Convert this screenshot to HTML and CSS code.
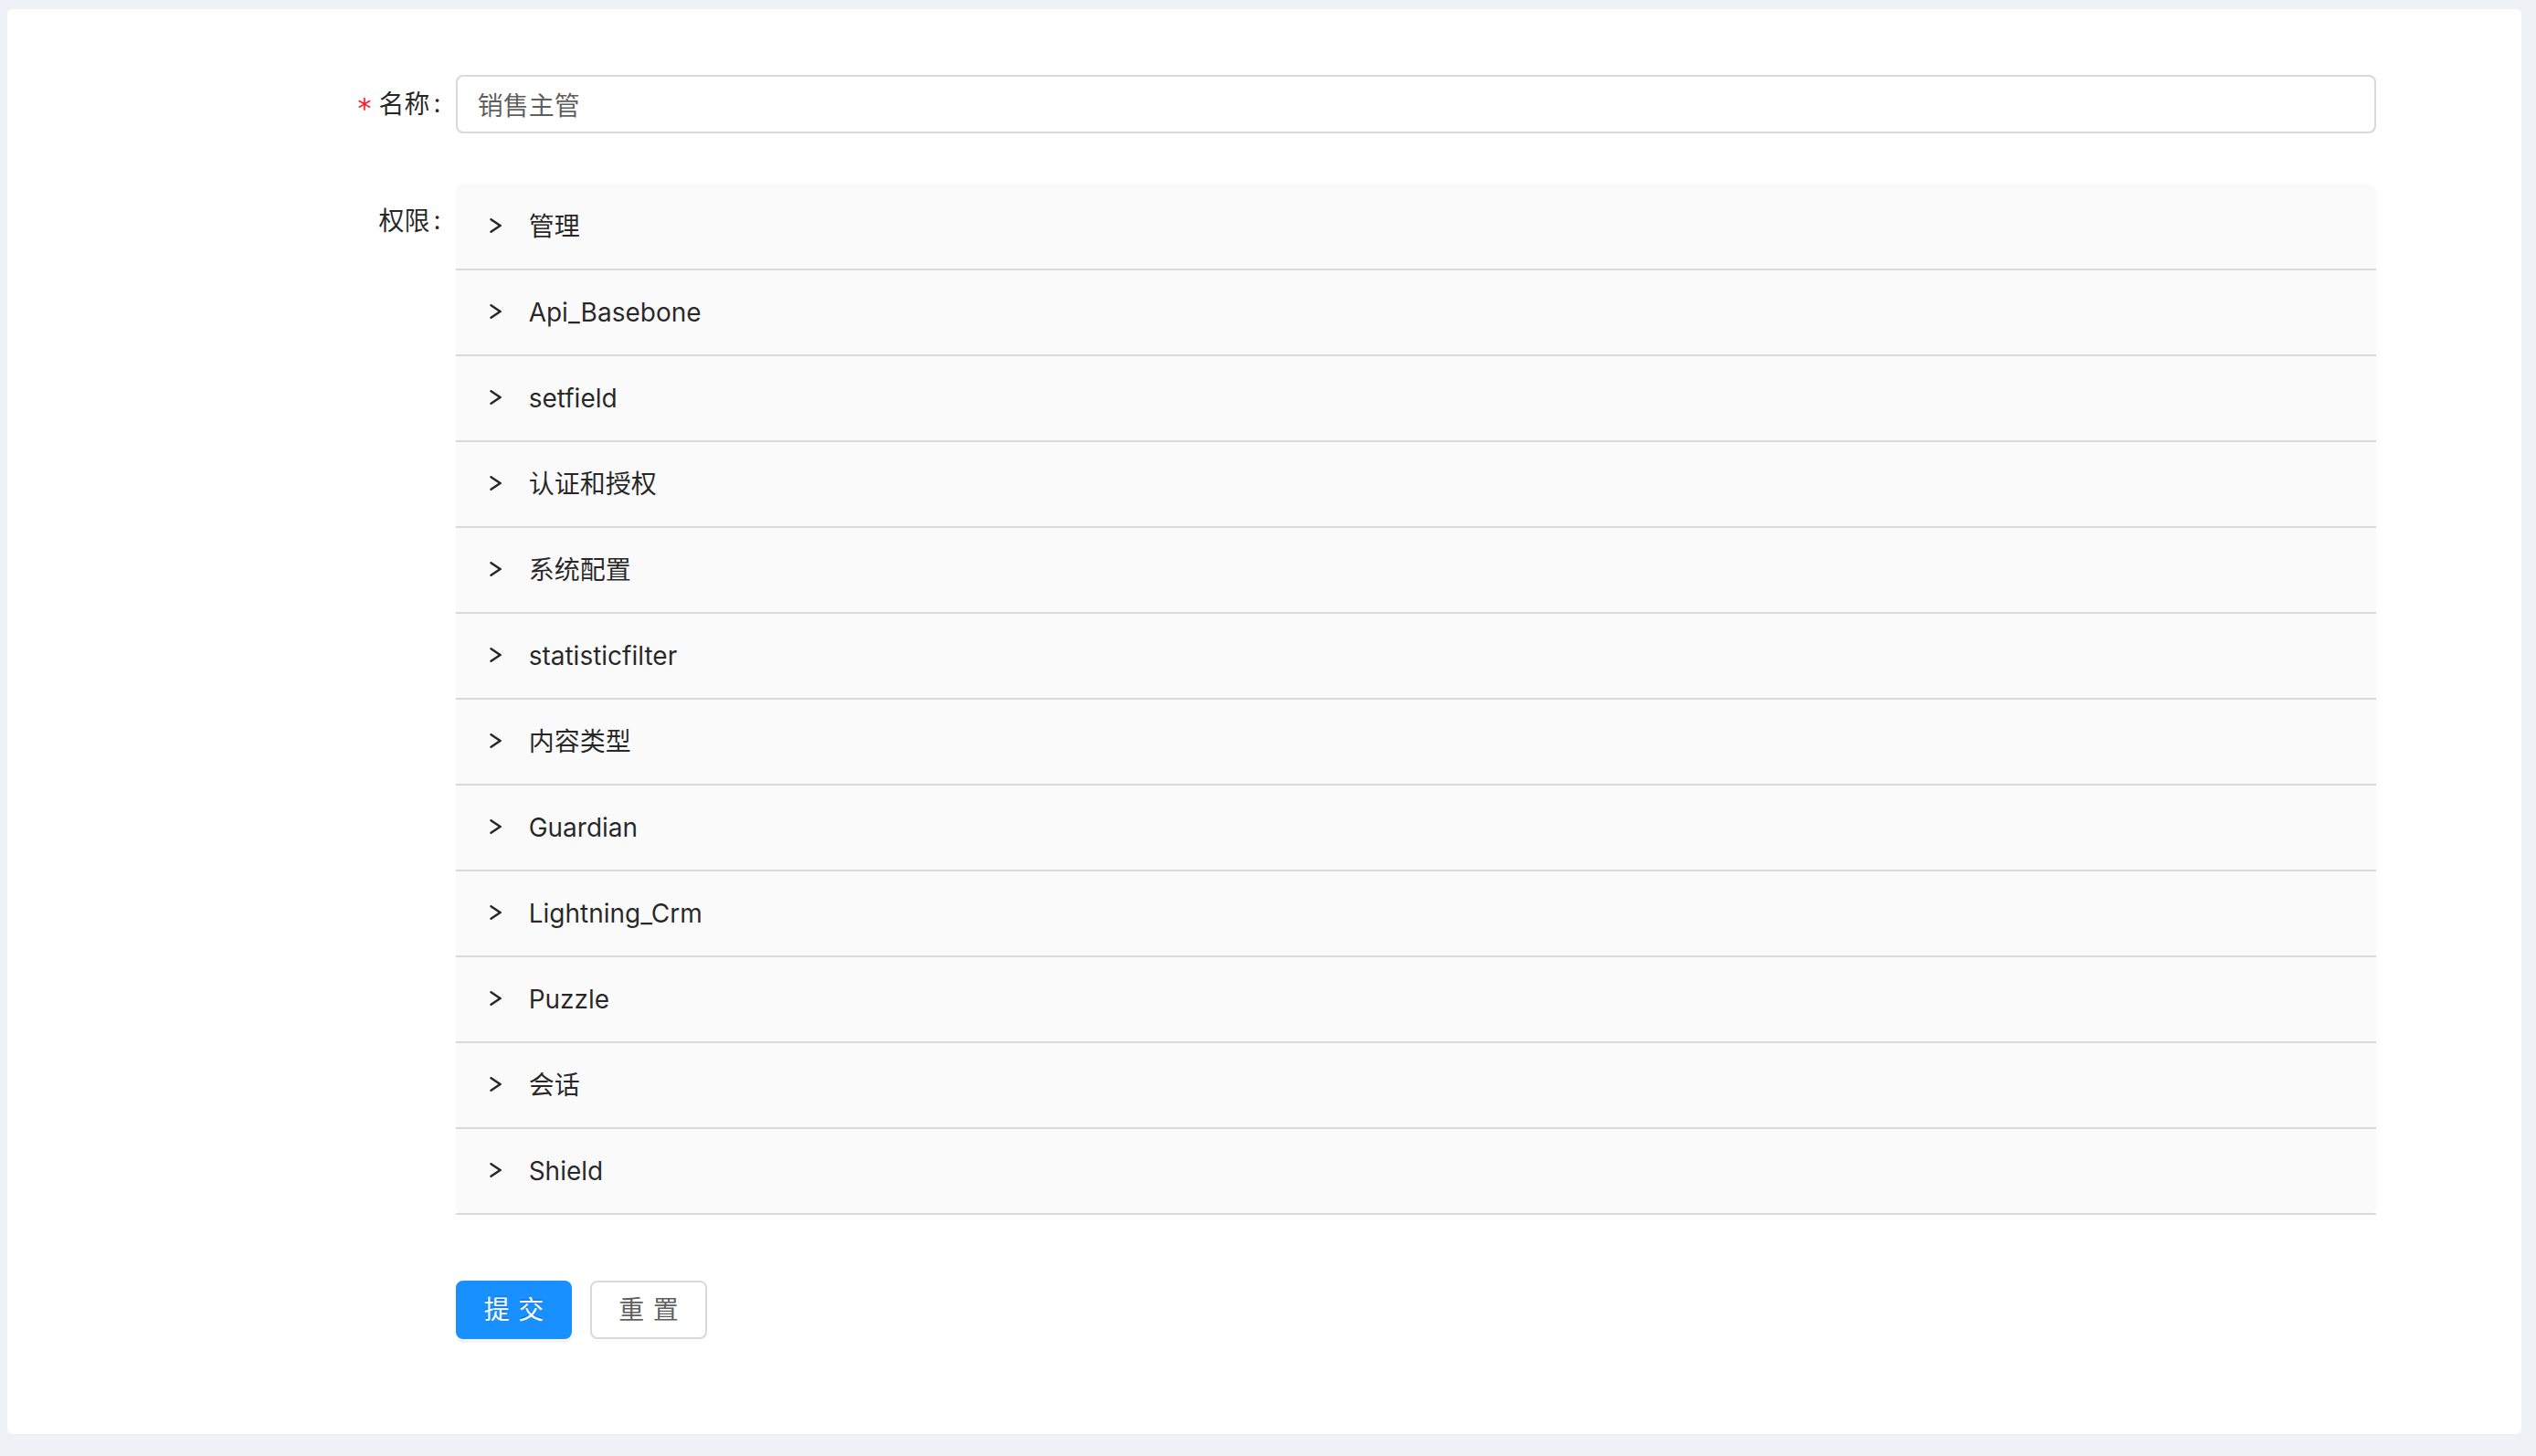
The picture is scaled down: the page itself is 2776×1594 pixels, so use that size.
FILE: index.html
```html
<!DOCTYPE html>
<html lang="zh-CN">
<head>
<meta charset="utf-8">
<title>角色编辑</title>
<link rel="stylesheet" href="styles.css">
</head>
<body>
<div class="layout">
  <div class="card">
    <form class="form">
      <div class="form-item">
        <div class="form-label"><label class="required">名称</label></div>
        <div class="form-control control-input">
          <input class="input" type="text" value="销售主管">
        </div>
      </div>
      <div class="form-item form-item-collapse">
        <div class="form-label"><label>权限</label></div>
        <div class="form-control">
          <div class="collapse">
            <div class="collapse-item"><div class="collapse-header"><svg class="arrow" viewBox="0 0 13 16"><polyline points="1.5,1.2 11.5,8 1.5,14.8"/></svg>管理</div></div>
            <div class="collapse-item"><div class="collapse-header"><svg class="arrow" viewBox="0 0 13 16"><polyline points="1.5,1.2 11.5,8 1.5,14.8"/></svg>Api_Basebone</div></div>
            <div class="collapse-item"><div class="collapse-header"><svg class="arrow" viewBox="0 0 13 16"><polyline points="1.5,1.2 11.5,8 1.5,14.8"/></svg>setfield</div></div>
            <div class="collapse-item"><div class="collapse-header"><svg class="arrow" viewBox="0 0 13 16"><polyline points="1.5,1.2 11.5,8 1.5,14.8"/></svg>认证和授权</div></div>
            <div class="collapse-item"><div class="collapse-header"><svg class="arrow" viewBox="0 0 13 16"><polyline points="1.5,1.2 11.5,8 1.5,14.8"/></svg>系统配置</div></div>
            <div class="collapse-item"><div class="collapse-header"><svg class="arrow" viewBox="0 0 13 16"><polyline points="1.5,1.2 11.5,8 1.5,14.8"/></svg>statisticfilter</div></div>
            <div class="collapse-item"><div class="collapse-header"><svg class="arrow" viewBox="0 0 13 16"><polyline points="1.5,1.2 11.5,8 1.5,14.8"/></svg>内容类型</div></div>
            <div class="collapse-item"><div class="collapse-header"><svg class="arrow" viewBox="0 0 13 16"><polyline points="1.5,1.2 11.5,8 1.5,14.8"/></svg>Guardian</div></div>
            <div class="collapse-item"><div class="collapse-header"><svg class="arrow" viewBox="0 0 13 16"><polyline points="1.5,1.2 11.5,8 1.5,14.8"/></svg>Lightning_Crm</div></div>
            <div class="collapse-item"><div class="collapse-header"><svg class="arrow" viewBox="0 0 13 16"><polyline points="1.5,1.2 11.5,8 1.5,14.8"/></svg>Puzzle</div></div>
            <div class="collapse-item"><div class="collapse-header"><svg class="arrow" viewBox="0 0 13 16"><polyline points="1.5,1.2 11.5,8 1.5,14.8"/></svg>会话</div></div>
            <div class="collapse-item"><div class="collapse-header"><svg class="arrow" viewBox="0 0 13 16"><polyline points="1.5,1.2 11.5,8 1.5,14.8"/></svg>Shield</div></div>
          </div>
        </div>
      </div>
      <div class="form-item form-item-last">
        <div class="form-control control-buttons">
          <button type="button" class="btn btn-primary"><span>提交</span></button>
          <button type="button" class="btn btn-default"><span>重置</span></button>
        </div>
      </div>
    </form>
  </div>
</div>
</body>
</html>
```

FILE: styles.css
```css
* {
  box-sizing: border-box;
}

html, body {
  margin: 0;
  padding: 0;
}

body {
  background: #eef1f5;
  font-family: Inter, "Noto Sans CJK SC", sans-serif;
  font-size: 28px;
  color: rgba(0, 0, 0, 0.65);
}

.layout {
  padding: 10px 16px 20px 8px;
}

.card {
  background: #ffffff;
  border-radius: 6px;
  padding: 64px 48px 48px 48px;
}

.form-item {
  display: grid;
  grid-template-columns: 4fr 19fr 1fr;
  margin-bottom: 48px;
}

.form-item-collapse {
  margin-bottom: 64px;
}

.form-item-last {
  margin-bottom: 48px;
}

.form-label {
  grid-column: 1;
  text-align: right;
  line-height: 80px;
  height: 80px;
  white-space: nowrap;
  color: rgba(0, 0, 0, 0.85);
}

.form-label label::after {
  content: ":";
  margin: 0 16px 0 4px;
  position: relative;
  top: -1px;
}

.form-label .required::before {
  content: "*";
  display: inline-block;
  margin-right: 8px;
  color: #f5222d;
  font-family: "DejaVu Sans", sans-serif;
  font-size: 30px;
  line-height: 1;
  position: relative;
  top: 5px;
}

.form-control {
  grid-column: 2;
  min-width: 0;
}

.control-input {
  padding: 8px 0;
  height: 80px;
}

.input {
  display: block;
  width: 100%;
  height: 64px;
  padding: 0 22px;
  border: 2px solid #d9d9d9;
  border-radius: 8px;
  background: #ffffff;
  font-family: Inter, "Noto Sans CJK SC", sans-serif;
  font-size: 28px;
  color: rgba(0, 0, 0, 0.65);
  outline: none;
}

.collapse {
  background: #fafafa;
  border-radius: 8px;
}

.collapse-item {
  border-bottom: 2px solid #d9d9d9;
}

.collapse-header {
  position: relative;
  display: flex;
  align-items: center;
  height: 92px;
  padding: 0 32px 0 80px;
  line-height: 44px;
  color: rgba(0, 0, 0, 0.85);
  white-space: nowrap;
}

.arrow {
  position: absolute;
  left: 37px;
  top: 50%;
  width: 13px;
  height: 16px;
  margin-top: -9px;
  fill: none;
  stroke: rgba(0, 0, 0, 0.85);
  stroke-width: 2.4;
  stroke-linecap: round;
  stroke-linejoin: miter;
}

.control-buttons {
  display: flex;
  align-items: center;
  gap: 20px;
  height: 80px;
  padding: 8px 0;
}

.btn {
  flex: none;
  height: 64px;
  padding: 0 29px;
  border: 2px solid #d9d9d9;
  border-radius: 8px;
  font-family: Inter, "Noto Sans CJK SC", sans-serif;
  font-size: 28px;
  line-height: 1.5;
  white-space: nowrap;
  cursor: pointer;
  box-shadow: 0 4px 0 rgba(0, 0, 0, 0.015);
}

.btn span {
  letter-spacing: 0.34em;
  margin-right: -0.34em;
}

.btn-primary {
  background: #1890ff;
  border-color: #1890ff;
  color: #ffffff;
  text-shadow: 0 -2px 0 rgba(0, 0, 0, 0.12);
  box-shadow: 0 4px 0 rgba(0, 0, 0, 0.045);
}

.btn-default {
  background: #ffffff;
  color: rgba(0, 0, 0, 0.65);
}
```
